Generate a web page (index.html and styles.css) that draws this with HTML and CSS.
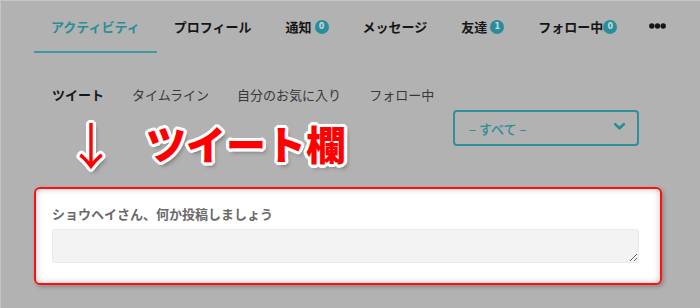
FILE: index.html
```html
<!DOCTYPE html>
<html lang="ja">
<head>
<meta charset="utf-8">
<link rel="stylesheet" href="styles.css">
</head>
<body>
<div class="page">
  <nav class="tabs">
    <a class="tab active">アクティビティ</a>
    <a class="tab">プロフィール</a>
    <a class="tab">通知<span class="badge">0</span></a>
    <a class="tab">メッセージ</a>
    <a class="tab">友達<span class="badge">1</span></a>
    <a class="tab">フォロー中<span class="badge tight">0</span></a>
    <a class="tab more"><svg class="dots" width="17" height="6" viewBox="0 0 17 6"><circle cx="2.8" cy="3" r="2.7" fill="#161616"/><circle cx="8.5" cy="3" r="2.7" fill="#161616"/><circle cx="14.2" cy="3" r="2.7" fill="#161616"/></svg></a>
  </nav>
  <div class="subtabs">
    <a class="sub current">ツイート</a>
    <a class="sub">タイムライン</a>
    <a class="sub">自分のお気に入り</a>
    <a class="sub">フォロー中</a>
  </div>
  <div class="filter-row">
    <div class="select">
      <span class="select-label">– すべて –</span>
      <svg class="chevron" width="11" height="7" viewBox="0 0 11 7"><polyline points="1.2,1.2 5.5,5.3 9.8,1.2" fill="none" stroke="#2b8d99" stroke-width="2.6" stroke-linecap="round" stroke-linejoin="round"/></svg>
    </div>
  </div>
  <div class="post-card">
    <div class="post-label">ショウヘイさん、何か投稿しましょう</div>
    <textarea class="post-input"></textarea>
  </div>
  <div class="annotation">
    <span class="arrow">↓</span>
    <span class="note">ツイート欄</span>
  </div>
</div>
</body>
</html>
```

FILE: styles.css
```css
html, body {
  margin: 0;
  padding: 0;
}
body {
  width: 700px;
  height: 308px;
  overflow: hidden;
  background: #b2b2b2;
  font-family: "Noto Sans CJK JP", "Noto Sans", sans-serif;
  color: #161616;
}
.page {
  position: relative;
  height: 307px;
  border-top: 1px solid #c6c6c6;
  border-left: 1px solid #c6c6c6;
}
.tabs {
  display: flex;
  align-items: flex-end;
  padding-left: 33px;
  height: 52px;
}
.tab {
  display: flex;
  align-items: center;
  height: 18px;
  padding: 15px 17px 15px;
  line-height: 18px;
  font-size: 13px;
  font-weight: 700;
  color: #161616;
  border-bottom: 2px solid transparent;
}
.tab.active {
  color: #2b8d99;
  border-bottom-color: #3f98a2;
}
.tab.more {
  padding-left: 15px;
}
.dots {
  display: block;
  margin-top: -3px;
}
.badge {
  display: inline-flex;
  align-items: center;
  justify-content: center;
  width: 14px;
  height: 14px;
  margin-left: 3px;
  border-radius: 50%;
  background: #2b8d99;
  color: #c9d9db;
  font-family: "DejaVu Sans", sans-serif;
  font-size: 8px;
  font-weight: 700;
  line-height: 1;
}
.badge.tight {
  margin-left: 0;
}
.subtabs {
  display: flex;
  gap: 28px;
  margin-top: 33px;
  padding-left: 51px;
  line-height: 18px;
  font-size: 13px;
  color: #383838;
}
.sub.current {
  font-weight: 700;
  color: #161616;
}
.filter-row {
  display: flex;
  justify-content: flex-end;
  margin-top: 6px;
  padding-right: 61px;
}
.select {
  box-sizing: border-box;
  width: 186px;
  height: 36px;
  display: flex;
  align-items: center;
  justify-content: space-between;
  padding: 0 12px 0 14px;
  border: 2px solid #2f8f9b;
  border-radius: 4px;
  color: #2b8d99;
  font-size: 13px;
  font-weight: 500;
}
.chevron {
  display: block;
  margin-top: -3px;
}
.post-card {
  box-sizing: border-box;
  margin: 41px 0 0 33px;
  width: 628px;
  height: 98px;
  padding: 17px 22px 0 16px;
  background: #fff;
  border: 2px solid #ff1010;
  border-radius: 6px;
  box-shadow: inset 0 0 7px rgba(0, 0, 0, 0.22), 2px 2px 4px rgba(0, 0, 0, 0.22);
}
.post-label {
  font-size: 13px;
  line-height: 16px;
  font-weight: 700;
  color: #6a6a6a;
}
.post-input {
  display: block;
  box-sizing: border-box;
  margin-top: 7px;
  width: 587px;
  height: 34px;
  background: #f3f3f3;
  border: 1px solid #e9e9e9;
  border-radius: 3px;
  outline: none;
  font-family: inherit;
}
.annotation {
  position: absolute;
  left: 65px;
  top: 119px;
  display: flex;
  align-items: flex-start;
  gap: 30px;
  font-size: 40px;
  line-height: 56px;
  font-weight: 900;
  color: #ff0000;
  text-shadow:
    3px 0 0 #fff, -3px 0 0 #fff, 0 3px 0 #fff, 0 -3px 0 #fff,
    2px 2px 0 #fff, -2px 2px 0 #fff, 2px -2px 0 #fff, -2px -2px 0 #fff,
    3px 1px 0 #fff, -3px 1px 0 #fff, 3px -1px 0 #fff, -3px -1px 0 #fff,
    1px 3px 0 #fff, -1px 3px 0 #fff, 1px -3px 0 #fff, -1px -3px 0 #fff,
    3px 4px 4px rgba(0, 0, 0, 0.35);
}
.note {
  margin-top: -5px;
}
.arrow {
  margin-top: -5px;
  font-weight: 400;
  font-size: 50px;
}
```
